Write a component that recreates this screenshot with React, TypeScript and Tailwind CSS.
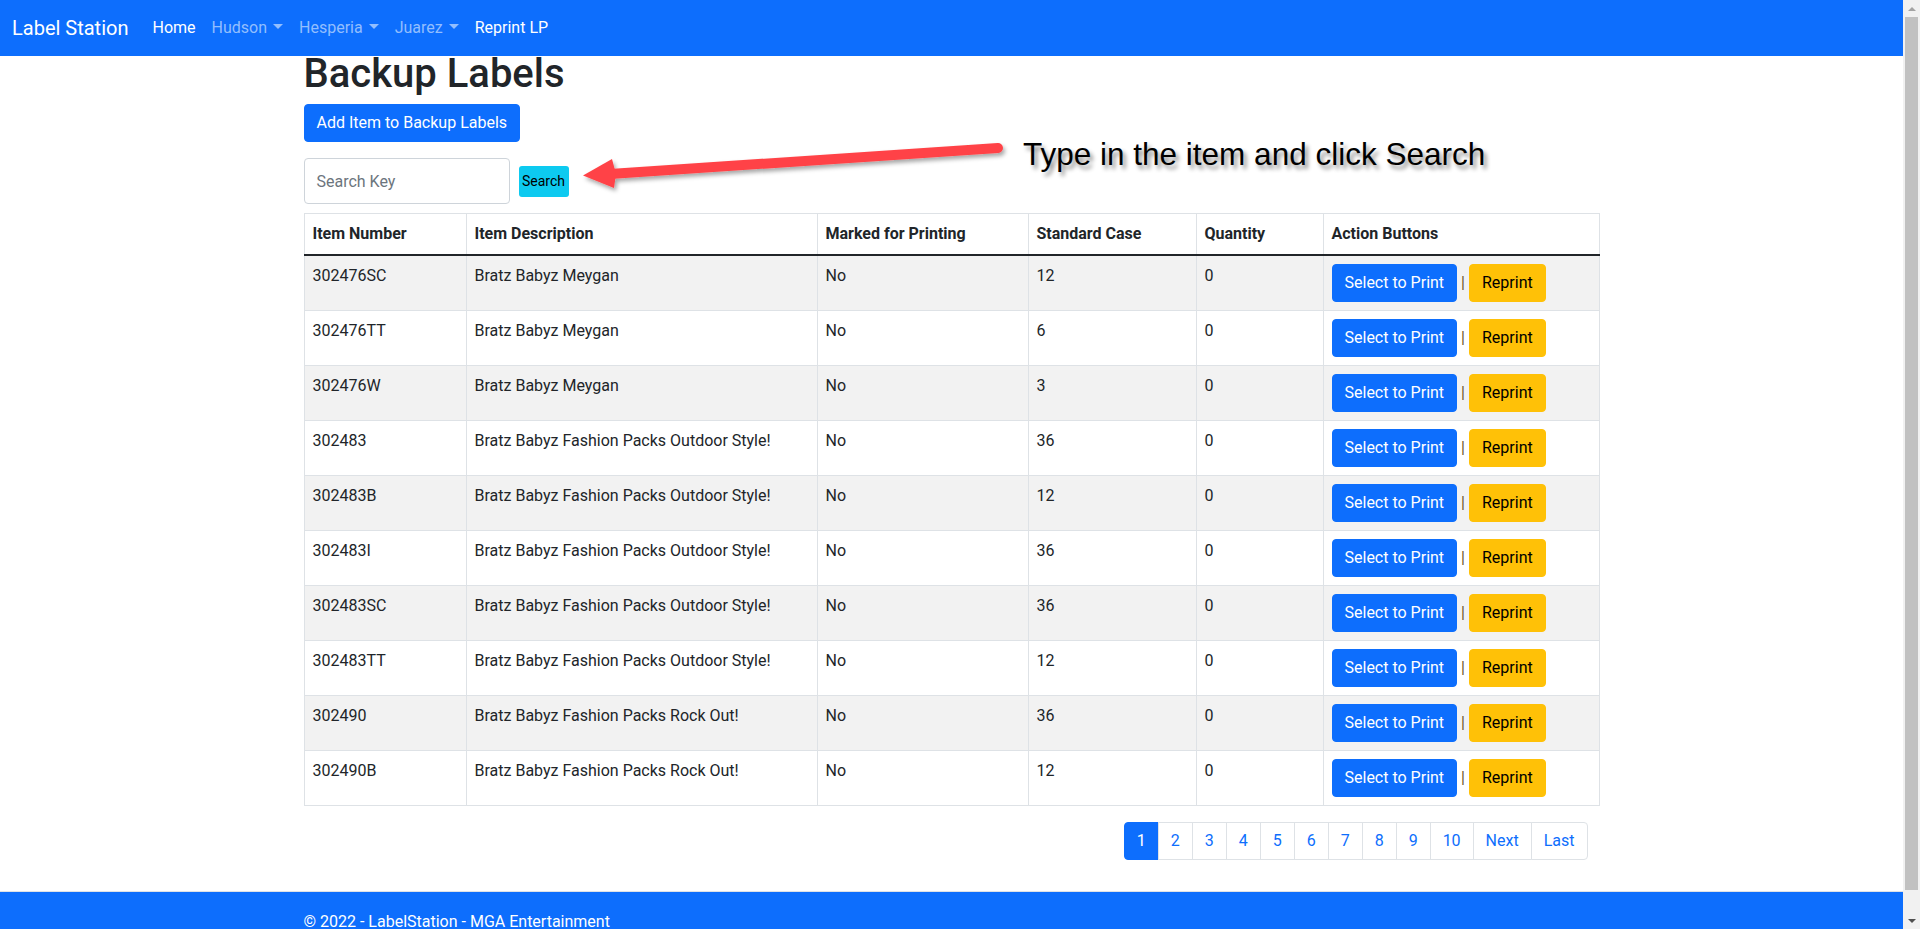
import React from "react";

const rows = [
  ["302476SC", "Bratz Babyz Meygan", "No", "12", "0"],
  ["302476TT", "Bratz Babyz Meygan", "No", "6", "0"],
  ["302476W", "Bratz Babyz Meygan", "No", "3", "0"],
  ["302483", "Bratz Babyz Fashion Packs Outdoor Style!", "No", "36", "0"],
  ["302483B", "Bratz Babyz Fashion Packs Outdoor Style!", "No", "12", "0"],
  ["302483I", "Bratz Babyz Fashion Packs Outdoor Style!", "No", "36", "0"],
  ["302483SC", "Bratz Babyz Fashion Packs Outdoor Style!", "No", "36", "0"],
  ["302483TT", "Bratz Babyz Fashion Packs Outdoor Style!", "No", "12", "0"],
  ["302490", "Bratz Babyz Fashion Packs Rock Out!", "No", "36", "0"],
  ["302490B", "Bratz Babyz Fashion Packs Rock Out!", "No", "12", "0"],
];

const pages = ["1", "2", "3", "4", "5", "6", "7", "8", "9", "10", "Next", "Last"];

function Caret() {
  return (
    <span className="ml-[6px] inline-block align-[0.255em] border-t-[5px] border-x-[5px] border-b-0 border-t-current border-x-transparent" />
  );
}

export default function App() {
  return (
    <div
      className="flex h-[929px] w-[1920px] overflow-hidden bg-white text-[#212529]"
      style={{ fontFamily: "Roboto, 'Noto Sans', Arial, sans-serif" }}
    >
      <div className="relative flex min-w-0 flex-1 flex-col overflow-hidden">
        {/* Navbar */}
        <nav className="flex h-[56px] shrink-0 items-center bg-[#0d6efd] px-3">
          <span className="mr-4 text-[20px] leading-[30px] text-white">Label Station</span>
          <div className="flex items-center text-base leading-6">
            <span className="px-2 text-white">Home</span>
            <span className="px-2 text-[#92befe]">
              Hudson
              <Caret />
            </span>
            <span className="px-2 text-[#92befe]">
              Hesperia
              <Caret />
            </span>
            <span className="px-2 text-[#92befe]">
              Juarez
              <Caret />
            </span>
            <span className="px-2 text-white">Reprint LP</span>
          </div>
        </nav>

        {/* Main */}
        <main className="mx-auto h-[835px] w-[1320px] shrink-0 px-3">
          <h1 className="text-[40px] font-medium leading-[36px]">Backup Labels</h1>
          <button className="mt-3 h-[38px] rounded border border-[#0d6efd] bg-[#0d6efd] px-3 text-base leading-6 text-white">
            Add Item to Backup Labels
          </button>

          <div className="mt-4 flex items-center">
            <div className="flex h-[46px] w-[206px] items-center rounded border border-[#ced4da] bg-white px-3 pt-[2px] text-base text-[#6c757d]">
              Search Key
            </div>
            <button className="ml-[9px] h-[31px] w-[50px] rounded-[3px] bg-[#0dcaf0] text-[14px] leading-[21px] text-black">
              Search
            </button>
          </div>

          <table className="mt-[9px] mb-4 w-full table-fixed border-collapse text-base leading-6">
            <colgroup>
              <col className="w-[162px]" />
              <col className="w-[351px]" />
              <col className="w-[211px]" />
              <col className="w-[168px]" />
              <col className="w-[127px]" />
              <col />
            </colgroup>
            <thead>
              <tr>
                {["Item Number", "Item Description", "Marked for Printing", "Standard Case", "Quantity", "Action Buttons"].map(
                  (h) => (
                    <th
                      key={h}
                      className="border border-[#dee2e6] border-b-2 border-b-[#212529] p-2 text-left align-bottom font-bold"
                    >
                      {h}
                    </th>
                  )
                )}
              </tr>
            </thead>
            <tbody>
              {rows.map((r, i) => (
                <tr key={r[0]} className={i % 2 === 0 ? "bg-[#f2f2f2]" : "bg-white"}>
                  {r.map((c, j) => (
                    <td key={j} className="border border-[#dee2e6] p-2 align-top">
                      {c}
                    </td>
                  ))}
                  <td className="border border-[#dee2e6] p-2 align-top">
                    <div className="flex h-[38px] items-center">
                      <button className="h-[38px] rounded border border-[#0d6efd] bg-[#0d6efd] px-3 leading-6 text-white">
                        Select to Print
                      </button>
                      <span className="mx-[4px] text-[#6b5326]">|</span>
                      <button className="h-[38px] rounded border border-[#ffc107] bg-[#ffc107] px-3 leading-6 text-black">
                        Reprint
                      </button>
                    </div>
                  </td>
                </tr>
              ))}
            </tbody>
          </table>

          <div className="flex justify-end pr-3">
            <ul className="flex text-base leading-6">
              {pages.map((p, i) => (
                <li key={p} className={i === 0 ? "" : "-ml-px"}>
                  <span
                    className={
                      "block border px-3 py-[6px] " +
                      (i === 0
                        ? "rounded-l border-[#0d6efd] bg-[#0d6efd] text-white"
                        : i === pages.length - 1
                        ? "rounded-r border-[#dee2e6] bg-white text-[#0d6efd]"
                        : "border-[#dee2e6] bg-white text-[#0d6efd]")
                    }
                  >
                    {p}
                  </span>
                </li>
              ))}
            </ul>
          </div>
        </main>

        {/* Footer */}
        <footer className="h-[60px] shrink-0 border-t border-[#dee2e6] bg-[#0d6efd]">
          <div className="mx-auto w-[1320px] px-3 text-base leading-[60px] whitespace-nowrap text-white">
            © 2022 - LabelStation - MGA Entertainment
          </div>
        </footer>

        {/* Annotation: arrow */}
        <svg
          className="absolute left-[560px] top-[130px]"
          width="460"
          height="80"
          viewBox="0 0 460 80"
        >
          <defs>
            <filter id="sh" x="-10%" y="-50%" width="120%" height="200%">
              <feDropShadow dx="2" dy="3" stdDeviation="2" floodColor="#000" floodOpacity="0.35" />
            </filter>
          </defs>
          <g filter="url(#sh)">
            <line x1="438" y1="18" x2="50" y2="44" stroke="#ff4346" strokeWidth="10" strokeLinecap="round" />
            <polygon points="23,45.5 52,29 56,44 54,58" fill="#ff4346" />
          </g>
        </svg>

        {/* Annotation: text */}
        <div
          className="absolute left-[1023px] top-[139px] whitespace-nowrap text-[31.5px] leading-none text-black [text-shadow:3px_4px_4px_rgba(0,0,0,0.45)]"
          style={{ fontFamily: "'Liberation Sans', Arial, sans-serif" }}
        >
          Type in the item and click Search
        </div>
      </div>

      {/* Scrollbar */}
      <div className="flex h-full w-[17px] shrink-0 flex-col bg-[#f1f1f1]">
        <div className="flex h-[17px] items-center justify-center">
          <span className="inline-block border-x-[4px] border-b-[4px] border-t-0 border-x-transparent border-b-[#a3a3a3]" />
        </div>
        <div className="mx-[2px] h-[873px] bg-[#c1c1c1]" />
        <div className="flex-1" />
        <div className="flex h-[17px] items-center justify-center">
          <span className="inline-block border-x-[4px] border-t-[4px] border-b-0 border-x-transparent border-t-[#505050]" />
        </div>
      </div>
    </div>
  );
}
